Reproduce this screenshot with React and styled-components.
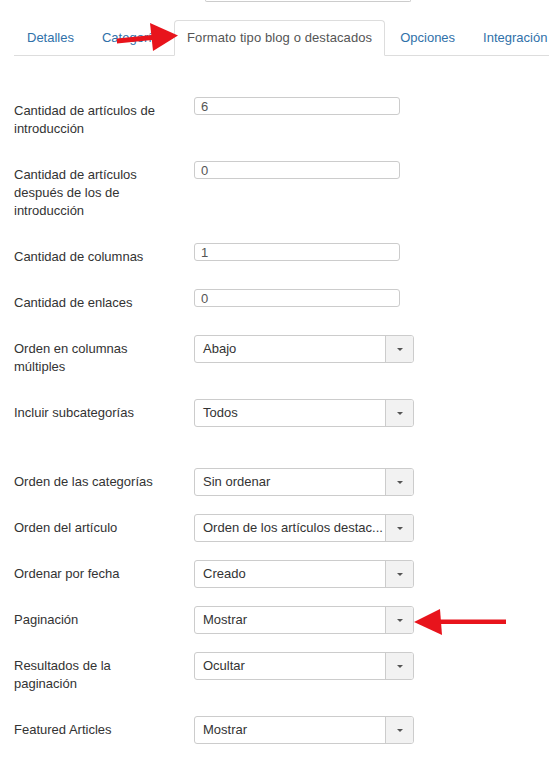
import React from 'react';
import styled, { createGlobalStyle } from 'styled-components';

const GlobalStyle = createGlobalStyle`
  html, body {
    margin: 0;
    padding: 0;
    background: #fff;
  }
  body {
    font-family: 'Liberation Sans', Helvetica, Arial, sans-serif;
    font-size: 13px;
    line-height: 18px;
    color: #333;
  }
`;

const tabs = [
  { label: 'Detalles' },
  { label: 'Categoría' },
  { label: 'Formato tipo blog o destacados', active: true },
  { label: 'Opciones' },
  { label: 'Integración' },
];

const fields = [
  { label: 'Cantidad de artículos de introducción', type: 'text', value: '6' },
  { label: 'Cantidad de artículos después de los de introducción', type: 'text', value: '0' },
  { label: 'Cantidad de columnas', type: 'text', value: '1' },
  { label: 'Cantidad de enlaces', type: 'text', value: '0' },
  { label: 'Orden en columnas múltiples', type: 'select', value: 'Abajo' },
  { label: 'Incluir subcategorías', type: 'select', value: 'Todos' },
  { spacer: true },
  { label: 'Orden de las categorías', type: 'select', value: 'Sin ordenar' },
  { label: 'Orden del artículo', type: 'select', value: 'Orden de los artículos destac...' },
  { label: 'Ordenar por fecha', type: 'select', value: 'Creado' },
  { label: 'Paginación', type: 'select', value: 'Mostrar' },
  { label: 'Resultados de la paginación', type: 'select', value: 'Ocultar' },
  { label: 'Featured Articles', type: 'select', value: 'Mostrar' },
];

const App = () => (
  <>
    <GlobalStyle />
    <Page>
      <TopStub />
      <TabBar>
        {tabs.map((t) => (
          <Tab key={t.label} $active={t.active}>
            {t.label}
          </Tab>
        ))}
      </TabBar>

      <Form>
        {fields.map((f, i) =>
          f.spacer ? (
            <Spacer key={i} />
          ) : (
            <ControlGroup key={i}>
              <ControlLabel>{f.label}</ControlLabel>
              {f.type === 'text' ? (
                <TextInput readOnly value={f.value} />
              ) : (
                <Select>
                  <SelectValue>{f.value}</SelectValue>
                  <SelectButton>
                    <Caret />
                  </SelectButton>
                </Select>
              )}
            </ControlGroup>
          )
        )}
      </Form>

      <TabArrow viewBox="0 0 72 36" width="72" height="36">
        <polygon points="7,20.5 42,17 42,22 7,25.5" fill="#e8141c" />
        <polygon points="40,5 68,17.5 43,33" fill="#e8141c" />
      </TabArrow>

      <FieldArrow viewBox="0 0 100 35" width="100" height="35">
        <polygon points="4,17 30,4 32,30" fill="#e8141c" />
        <polygon points="30,14.5 96,14.5 96,19 30,19" fill="#e8141c" />
      </FieldArrow>
    </Page>
  </>
);

// Styles
const Page = styled.div`
  position: relative;
  width: 549px;
  height: 783px;
  overflow: hidden;
  padding-left: 14px;
  box-sizing: border-box;
`;

const TopStub = styled.div`
  margin-left: 191px;
  width: 204px;
  height: 1px;
  border: 1px solid #ccc;
  border-top: none;
  border-radius: 0 0 3px 3px;
`;

const TabBar = styled.div`
  display: flex;
  flex-wrap: nowrap;
  margin-top: 18px;
  border-bottom: 1px solid #ddd;
`;

const Tab = styled.div`
  flex-shrink: 0;
  white-space: nowrap;
  padding: 0 12px;
  line-height: 34px;
  letter-spacing: ${(p) => (p.$active ? '0.1px' : '0')};
  margin-right: 2px;
  margin-bottom: -1px;
  border: 1px solid ${(p) => (p.$active ? '#ddd' : 'transparent')};
  border-bottom-color: ${(p) => (p.$active ? '#fff' : 'transparent')};
  border-radius: 4px 4px 0 0;
  background: ${(p) => (p.$active ? '#fff' : 'transparent')};
  color: ${(p) => (p.$active ? '#555' : '#3071a9')};
`;

const Form = styled.div`
  margin-top: 41px;
`;

const ControlGroup = styled.div`
  display: flex;
  align-items: flex-start;
  margin-bottom: 18px;
`;

const Spacer = styled.div`
  height: 23px;
`;

const ControlLabel = styled.div`
  flex-shrink: 0;
  width: 160px;
  margin-right: 20px;
  padding: 5px 0;
  line-height: 18px;
  color: #333;
`;

const TextInput = styled.input`
  box-sizing: border-box;
  width: 206px;
  height: 18px;
  margin: 0;
  padding: 0 6px;
  border: 1px solid #ccc;
  border-radius: 3px;
  font-family: inherit;
  font-size: 13px;
  color: #555;
  background: #fff;
  outline: none;
`;

const Select = styled.div`
  box-sizing: border-box;
  display: flex;
  width: 220px;
  height: 28px;
  border: 1px solid #ccc;
  border-radius: 3px;
  background: #fff;
  overflow: hidden;
`;

const SelectValue = styled.div`
  flex: 1;
  min-width: 0;
  padding-left: 8px;
  line-height: 26px;
  white-space: nowrap;
  overflow: hidden;
  text-overflow: ellipsis;
  color: #333;
`;

const SelectButton = styled.div`
  flex-shrink: 0;
  width: 27px;
  border-left: 1px solid #ccc;
  background: #f2f2f2;
  display: flex;
  align-items: center;
  justify-content: center;
`;

const Caret = styled.span`
  width: 0;
  height: 0;
  border-left: 3.5px solid transparent;
  border-right: 3.5px solid transparent;
  border-top: 3.5px solid #555;
`;

const TabArrow = styled.svg`
  position: absolute;
  left: 110px;
  top: 18px;
`;

const FieldArrow = styled.svg`
  position: absolute;
  left: 410px;
  top: 605px;
`;

export default App;
